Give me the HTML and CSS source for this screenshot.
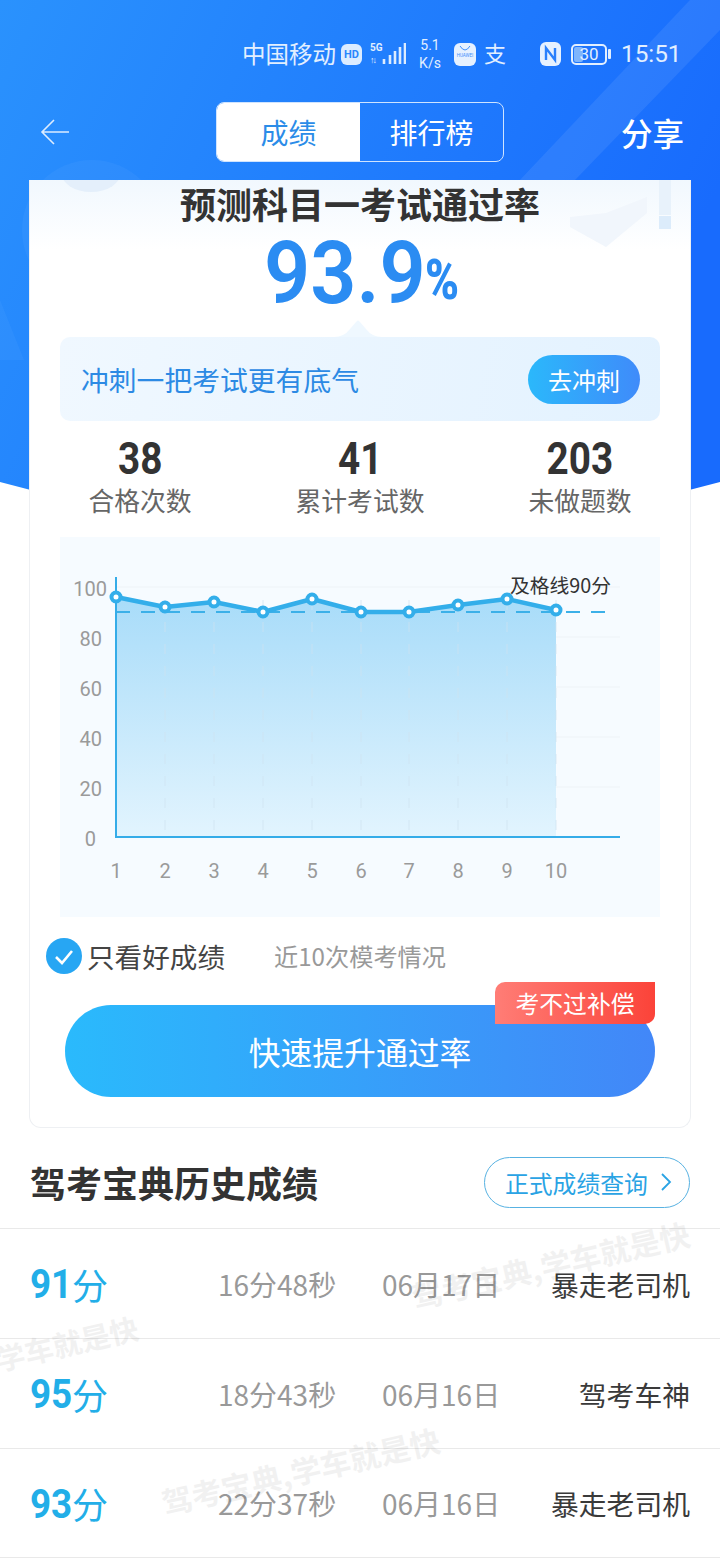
FILE: index.html
```html
<!DOCTYPE html>
<html lang="zh">
<head>
<meta charset="utf-8">
<title>成绩</title>
<link rel="stylesheet" href="styles.css">
</head>
<body>
<div class="page">
  <svg class="hero-bg" viewBox="0 0 720 540" preserveAspectRatio="none">
    <defs>
      <linearGradient id="hero" x1="0" y1="0" x2="1" y2="0.35">
        <stop offset="0" stop-color="#2a92fd"/>
        <stop offset="1" stop-color="#186bfd"/>
      </linearGradient>
    </defs>
    <path d="M0 0H720V482Q360 580 0 482Z" fill="url(#hero)"/>
    <path d="M690 0H720V30L575 180H520Z" fill="#fff" opacity=".08"/>
    <circle cx="92" cy="230" r="70" fill="#fff" opacity=".04"/>
    <path d="M0 300L24 360H0Z" fill="#fff" opacity=".035"/>
  </svg>

  <div class="status">
    <span class="carrier">中国移动</span>
    <span class="hd">HD</span>
    <span class="signal">
      <span class="net"><span>5G</span><span class="arrows">↑↓</span></span>
      <svg class="bars" width="24" height="24" viewBox="0 0 24 24"><path d="M2 17v5M8 13v9M13 9v13M18 5v17M23 1v21" stroke="#dcecff" stroke-width="2.6"/></svg>
    </span>
    <span class="speed"><span>5.1</span><span>K/s</span></span>
    <span class="hw"><svg width="12" height="6" viewBox="0 0 12 6"><path d="M1 0q5 8 10 0" fill="none" stroke="#3f8ffb" stroke-width="1"/></svg><span>HUAWEI</span></span>
    <span class="zhi">支</span>
    <svg class="nfc" width="21" height="24" viewBox="0 0 21 24"><rect width="21" height="24" rx="6" fill="#e6f1ff"/><path d="M6 18V6l9 12V6" fill="none" stroke="#2a80fc" stroke-width="2.4"/></svg>
    <span class="battery"><span class="batt-box"><span class="batt-fill"></span><span class="batt-num">30</span></span><span class="batt-tip"></span></span>
    <span class="time">15:51</span>
  </div>

  <div class="nav">
    <svg class="back" width="30" height="26" viewBox="0 0 30 26"><path d="M29 13H2M14 1L2 13l12 12" fill="none" stroke="#dcecff" stroke-width="1.6"/></svg>
    <div class="seg">
      <span class="seg-item seg-on">成绩</span>
      <span class="seg-item">排行榜</span>
    </div>
    <span class="share">分享</span>
  </div>

  <section class="card">
    <svg class="card-deco" width="660" height="70" viewBox="0 0 660 70">
      <ellipse cx="61" cy="-8" rx="30" ry="20" fill="#e4effb"/>
      <path d="M540 47L576 67 617 33V17L576 33 540 37Z" fill="#f1f6fc"/>
      <path d="M629 0h12v35h-12z" fill="#e8f2fb"/>
      <path d="M629 36h12v13h-12z" fill="#dcecfb"/>
    </svg>
    <h1 class="title">预测科目一考试通过率</h1>
    <div class="rate"><span class="rate-num">93.9</span><span class="rate-pct">%</span></div>

    <div class="banner">
      <svg class="notch" width="48" height="18" viewBox="0 0 48 18"><path d="M0 18Q10 18 16 10L23 2Q24 1 25 2L32 10Q38 18 48 18Z" fill="#eff8ff"/></svg>
      <span class="banner-text">冲刺一把考试更有底气</span>
      <span class="banner-btn">去冲刺</span>
    </div>

    <div class="stats">
      <div class="stat"><b>38</b><span>合格次数</span></div>
      <div class="stat"><b>41</b><span>累计考试数</span></div>
      <div class="stat"><b>203</b><span>未做题数</span></div>
    </div>

    <div class="chart">
      <svg width="600" height="380" viewBox="60 537 600 380">
        <defs>
          <linearGradient id="area" x1="0" y1="0" x2="0" y2="1">
            <stop offset="0" stop-color="#a8dcf9"/>
            <stop offset="1" stop-color="#e2f4fe"/>
          </linearGradient>
        </defs>
        <g class="grid">
          <path d="M116 587H620M116 637H620M116 687H620M116 737H620M116 787H620"/>
        </g>
        <path d="M116 597L165 607L214 602L263 612L312 599L361 612L409 612L458 605L507 599L556 610V837H116Z" fill="url(#area)"/>
        <g class="vgrid">
          <path d="M165 600V837M214 600V837M263 600V837M312 600V837M361 600V837M409 600V837M458 600V837M507 600V837M556 600V837"/>
        </g>
        <path class="pass" d="M116 612H612"/>
        <path class="axis" d="M116 577V837H620"/>
        <path class="line" d="M116 597L165 607L214 602L263 612L312 599L361 612L409 612L458 605L507 599L556 610"/>
        <g class="dots">
          <circle cx="116" cy="597" r="4.5"/><circle cx="165" cy="607" r="4.5"/><circle cx="214" cy="602" r="4.5"/><circle cx="263" cy="612" r="4.5"/><circle cx="312" cy="599" r="4.5"/><circle cx="361" cy="612" r="4.5"/><circle cx="409" cy="612" r="4.5"/><circle cx="458" cy="605" r="4.5"/><circle cx="507" cy="599" r="4.5"/><circle cx="556" cy="610" r="4.5"/>
        </g>
        <g class="ylab">
          <text x="107" y="596">100</text><text x="102" y="646">80</text><text x="102" y="696">60</text><text x="102" y="746">40</text><text x="102" y="796">20</text><text x="96" y="846">0</text>
        </g>
        <g class="xlab">
          <text x="116" y="878">1</text><text x="165" y="878">2</text><text x="214" y="878">3</text><text x="263" y="878">4</text><text x="312" y="878">5</text><text x="361" y="878">6</text><text x="409" y="878">7</text><text x="458" y="878">8</text><text x="507" y="878">9</text><text x="556" y="878">10</text>
        </g>
        <text class="passlab" x="510" y="593">及格线90分</text>
      </svg>
    </div>

    <div class="filter">
      <svg width="36" height="36" viewBox="0 0 36 36"><circle cx="18" cy="18" r="18" fill="#27a6f3"/><path d="M10 19l6 6 10-12" fill="none" stroke="#fff" stroke-width="2.6"/></svg>
      <span class="filter-label">只看好成绩</span>
      <span class="filter-note">近10次模考情况</span>
    </div>

    <div class="cta-wrap">
      <div class="cta">快速提升通过率</div>
      <span class="badge">考不过补偿</span>
    </div>
  </section>

  <div class="hist-head">
    <h2>驾考宝典历史成绩</h2>
    <span class="query">正式成绩查询<svg width="12" height="20" viewBox="0 0 12 20"><path d="M2 2l8 8-8 8" fill="none" stroke="#2aa3e4" stroke-width="1.8"/></svg></span>
  </div>

  <ul class="rows">
    <li class="row"><span class="score"><b>91</b>分</span><span class="dur">16分48秒</span><span class="date">06月17日</span><span class="who">暴走老司机</span></li>
    <li class="row"><span class="score"><b>95</b>分</span><span class="dur">18分43秒</span><span class="date">06月16日</span><span class="who">驾考车神</span></li>
    <li class="row"><span class="score"><b>93</b>分</span><span class="dur">22分37秒</span><span class="date">06月16日</span><span class="who">暴走老司机</span></li>
  </ul>

  <span class="mark mark-a">驾考宝典,学车就是快</span>
  <span class="mark mark-b">学车就是快</span>
  <span class="mark mark-c">驾考宝典,学车就是快</span>
</div>
</body>
</html>
```

FILE: styles.css
```css
* { box-sizing: border-box; }
html, body { margin: 0; padding: 0; }
body {
  width: 720px;
  height: 1560px;
  overflow: hidden;
  background: #fff;
  font-family: "Noto Sans CJK SC", "Noto Sans", sans-serif;
  color: #333;
}
.page { position: relative; width: 720px; height: 1560px; overflow: hidden; }
.hero-bg { position: absolute; left: 0; top: 0; width: 720px; height: 540px; }

/* status bar */
.status {
  position: relative;
  display: flex;
  align-items: center;
  height: 36px;
  margin-top: 36px;
  padding-left: 242px;
  color: #e2efff;
}
.carrier { margin-top: -2px; font-size: 23.5px; line-height: 36px; width: 94px; white-space: nowrap; }
.hd {
  width: 21px; height: 21px; margin-left: 5px;
  border-radius: 6px; background: #dcecff; color: #2a86fc;
  font: 700 11px/21px Roboto, sans-serif; text-align: center;
}
.signal { display: flex; align-items: flex-end; margin-left: 8px; width: 36px; height: 24px; }
.net { display: flex; flex-direction: column; width: 14px; font: 700 10px/12px Roboto, sans-serif; }
.arrows { font-size: 9px; letter-spacing: -2px; }
.bars { margin-left: -2px; }
.speed {
  display: flex; flex-direction: column; align-items: center;
  width: 26px; margin-left: 11px;
  font: 400 14px/18px Roboto, sans-serif;
}
.hw {
  display: flex; flex-direction: column; align-items: center;
  width: 22px; height: 23px; margin-left: 11px; padding-top: 3px;
  border-radius: 6px; background: #e6f1ff; color: #3f8ffb;
  font: 400 4.5px/8px Roboto, sans-serif;
}
.zhi { width: 24px; margin: -4px 0 0 7px; font-size: 22px; line-height: 30px; text-align: center; }
.nfc { margin-left: 33px; }
.battery { display: flex; align-items: center; margin-left: 10px; width: 40px; }
.batt-box {
  position: relative; display: block; width: 36px; height: 21px;
  border: 2px solid #e2efff; border-radius: 5px; overflow: hidden;
}
.batt-fill { position: absolute; left: 1px; top: 1px; bottom: 1px; width: 9px; border-radius: 2px; background: #7fb5fc; }
.batt-num { position: absolute; left: 0; right: 0; top: 0; text-align: center; font: 400 17px/17px Roboto, sans-serif; }
.batt-tip { width: 3px; height: 10px; margin-left: 1px; background: #e2efff; border-radius: 1px; }
.time { margin-left: 10px; font: 400 24.3px/36px Roboto, sans-serif; }

/* nav */
.nav { position: relative; display: flex; align-items: center; height: 60px; margin-top: 30px; padding-left: 40px; }
.back { display: block; }
.seg {
  display: flex; width: 288px; height: 60px; margin-left: 146px;
  border: 1px solid #cfe4ff; border-radius: 8px; overflow: hidden;
}
.seg-item { flex: 1; text-align: center; font-size: 28px; line-height: 58px; color: #fff; }
.seg-on { background: #fff; color: #2b8ce8; }
.share { margin-left: 117px; font-size: 31.5px; line-height: 60px; color: #fff; font-weight: 500; white-space: nowrap; }

/* card */
.card {
  position: relative;
  width: 662px; height: 948px; margin: 18px 0 0 29px;
  padding: 0 30px;
  border: 1px solid #eef0f3; border-top: 0;
  border-radius: 0 0 12px 12px;
  background: linear-gradient(#f1f8fe, #fff 70px);
}
.card-deco { position: absolute; left: 0; top: 0; overflow: hidden; }
.title {
  position: relative;
  height: 46px; margin: 0; text-align: center;
  font-size: 36px; line-height: 46px; font-weight: 700; color: #333; white-space: nowrap;
}
.rate {
  position: relative;
  display: flex; justify-content: center; align-items: flex-start;
  height: 111px; padding-left: 2px;
  color: #2b8cf2; font-family: Roboto, sans-serif; white-space: nowrap;
}
.rate-num {
  display: inline-block; width: 161px;
  font-size: 88px; line-height: 94px; font-weight: 600;
  transform: scaleX(.92); transform-origin: left center;
}
.rate-pct {
  display: inline-block; width: 33px;
  font-size: 56px; line-height: 108px; font-weight: 900;
  transform: scaleX(.82); transform-origin: left center;
}

.banner {
  position: relative;
  display: flex; align-items: center; justify-content: space-between;
  height: 84px; padding: 0 20px 0 21px;
  border-radius: 10px;
  background: linear-gradient(100deg, #f0f8ff, #e3f2ff);
}
.notch { position: absolute; left: 274px; top: -18px; display: block; }
.banner-text { position: relative; font-size: 27.8px; line-height: 40px; color: #2c8ae4; white-space: nowrap; }
.banner-btn {
  position: relative;
  width: 112px; height: 49px; border-radius: 25px;
  background: linear-gradient(90deg, #2bb8fb, #3f8bfa);
  color: #fff; font-size: 24px; line-height: 49px; text-align: center;
}

.stats { display: grid; grid-template-columns: repeat(3, 220px); margin: 16px 0 0 -30px; height: 100px; }
.stat { display: flex; flex-direction: column; align-items: center; }
.stat b { display: inline-block; font: 700 44px/44px Roboto, sans-serif; color: #333; transform: scaleX(.88); }
.stat span { font-size: 25.8px; line-height: 38px; color: #666; white-space: nowrap; }

.chart { width: 600px; height: 380px; background: #f6fbff; }
.chart svg { display: block; }
.grid path { stroke: #eef3f7; stroke-width: 1; fill: none; }
.vgrid path { stroke: #cfe3f0; stroke-width: 1; stroke-dasharray: 10 12; fill: none; opacity: .7; }
.pass { stroke: #3cb0e8; stroke-width: 2; stroke-dasharray: 14 11; fill: none; }
.axis { stroke: #35ace8; stroke-width: 2; fill: none; }
.line { stroke: #33aeea; stroke-width: 4.5; fill: none; stroke-linejoin: round; }
.dots circle { fill: #fff; stroke: #33aeea; stroke-width: 4; }
.ylab text { font: 400 20px Roboto, sans-serif; fill: #9a9a9a; text-anchor: end; }
.xlab text { font: 400 20px Roboto, sans-serif; fill: #9a9a9a; text-anchor: middle; }
.passlab { font-family: "Noto Sans CJK SC", sans-serif; font-size: 19.8px; fill: #333; }

.filter { display: flex; align-items: center; height: 36px; margin: 21px 0 0 -14px; }
.filter-label { margin-left: 5px; font-size: 27.6px; line-height: 36px; color: #444; white-space: nowrap; }
.filter-note { margin-left: 49px; font-size: 24.2px; line-height: 36px; color: #999; white-space: nowrap; }

.cta-wrap { position: relative; width: 590px; margin: 31px 0 0 5px; }
.cta {
  height: 92px; border-radius: 46px;
  background: linear-gradient(90deg, #2abafc, #4287f8);
  color: #fff; font-size: 31.8px; line-height: 92px; text-align: center; white-space: nowrap;
}
.badge {
  position: absolute; right: 0; top: -23px;
  width: 160px; height: 42px;
  border-radius: 10px 0 10px 0;
  background: linear-gradient(90deg, #ff7d76, #fb4339);
  color: #fff; font-size: 23.8px; line-height: 42px; text-align: center; white-space: nowrap;
}

/* history */
.hist-head { display: flex; align-items: center; justify-content: space-between; height: 100px; padding: 8px 30px 0 30px; }
.hist-head h2 { margin: 0; font-size: 36px; line-height: 50px; font-weight: 700; color: #333; white-space: nowrap; }
.query {
  display: flex; align-items: center; gap: 12px;
  width: 206px; height: 51px; padding-left: 20px;
  border: 1px solid #58b2e2; border-radius: 26px;
  color: #2aa3e4; font-size: 23.8px; white-space: nowrap;
}
.rows { margin: 0; padding: 0; list-style: none; }
.row {
  display: flex; align-items: center; height: 110px; padding: 0 30px;
  border-top: 1px solid #e9e9e9;
  font-size: 28px; color: #999; white-space: nowrap;
}
.row:last-child { border-bottom: 1px solid #e9e9e9; }
.score { display: flex; align-items: center; width: 188px; color: #22aee8; font-size: 36px; }
.score b { display: inline-block; width: 42px; margin-top: 2px; font: 700 40px Roboto, sans-serif; transform: scaleX(.92); transform-origin: left center; }
.dur { width: 164px; }
.date { width: 120px; }
.who { margin-left: auto; font-size: 27.8px; color: #3a3a3a; }

.mark {
  position: absolute;
  font-size: 30.5px; font-weight: 700; line-height: 36px; color: #000; opacity: .05;
  white-space: nowrap; transform: rotate(-13deg); transform-origin: left bottom;
}
.mark-a { left: 416px; top: 1278px; }
.mark-b { left: 0; top: 1340px; font-size: 29px; }
.mark-c { left: 166px; top: 1484px; }
```
